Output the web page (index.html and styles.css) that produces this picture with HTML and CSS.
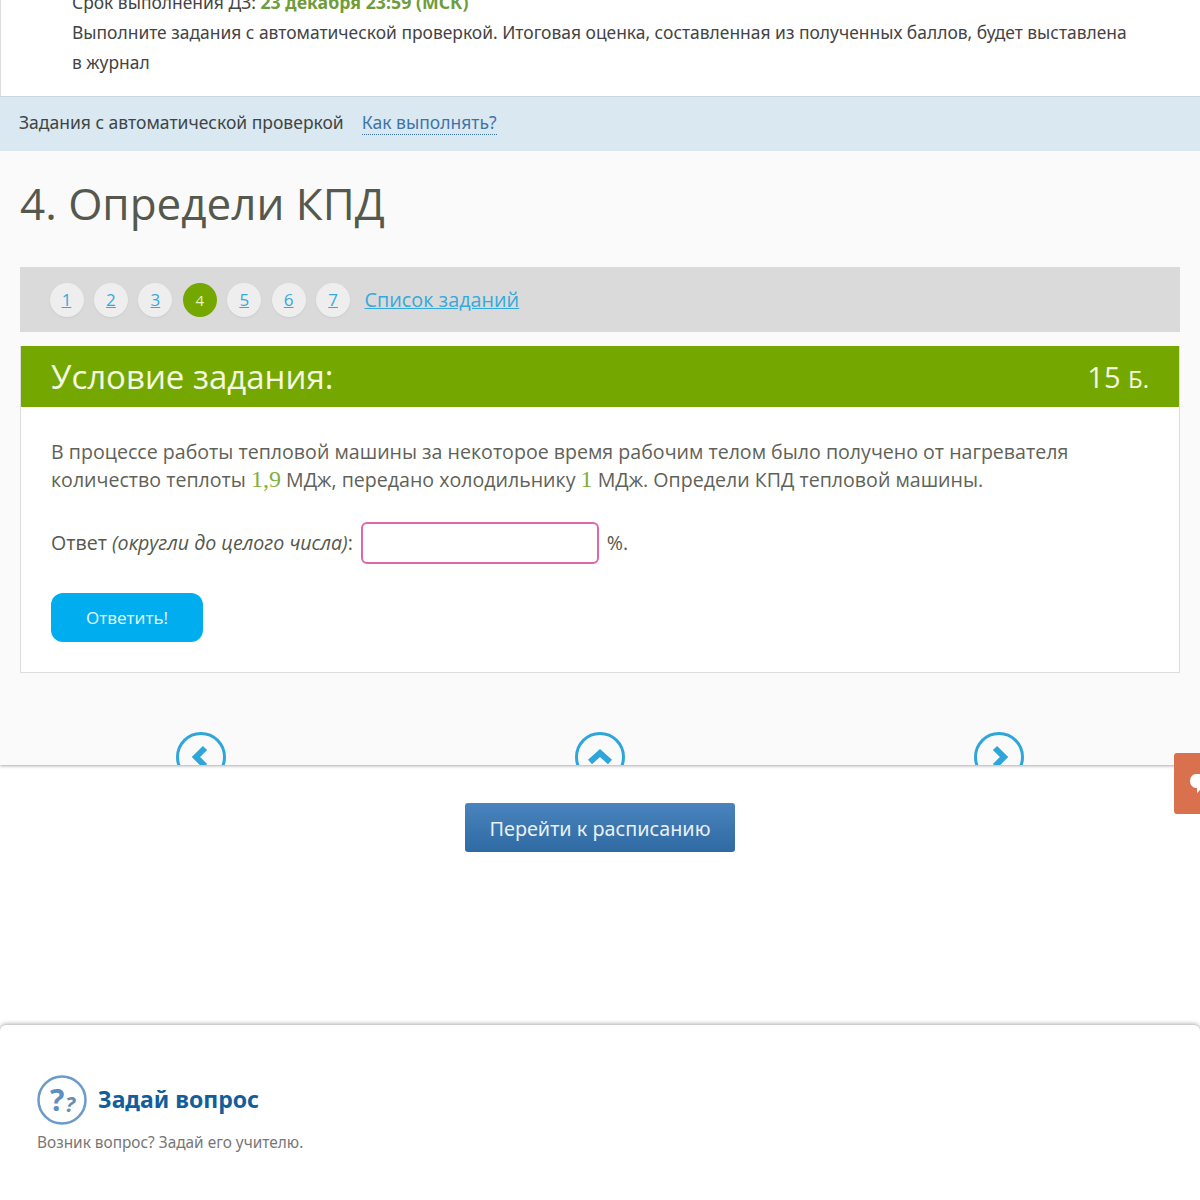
FILE: index.html
```html
<!DOCTYPE html>
<html lang="ru">
<head>
    <meta charset="UTF-8" />
    <title>Определи КПД</title>
    <link rel="stylesheet" href="styles.css">
</head>
<body>
    <div class="page">
        <div class="intro">
            <p>Срок выполнения ДЗ: <b class="deadline">23 декабря 23:59 (МСК)</b></p>
            <p>Выполните задания с автоматической проверкой. Итоговая оценка, составленная из полученных баллов, будет выставлена в журнал</p>
        </div>
        <div class="mode-bar">
            <span>Задания с автоматической проверкой</span>
            <a class="how-link" href="#">Как выполнять?</a>
        </div>

        <div class="lesson">
            <h1>4. Определи КПД</h1>

            <div class="pager">
                <a class="pager-num" href="#">1</a>
                <a class="pager-num" href="#">2</a>
                <a class="pager-num" href="#">3</a>
                <span class="pager-num current">4</span>
                <a class="pager-num" href="#">5</a>
                <a class="pager-num" href="#">6</a>
                <a class="pager-num" href="#">7</a>
                <a class="pager-list" href="#">Список заданий</a>
            </div>

            <div class="task">
                <div class="task-head">
                    <span class="task-title">Условие задания:</span>
                    <span class="task-score">15 <small>Б.</small></span>
                </div>
                <div class="task-body">
                    <p class="task-text">В процессе работы тепловой машины за некоторое время рабочим телом было получено от нагревателя количество теплоты <span class="num">1,9</span> МДж, передано холодильнику <span class="num">1</span> МДж. Определи КПД тепловой машины.</p>
                    <div class="answer">
                        <span>Ответ <i>(округли до целого числа)</i>:</span>
                        <input class="answer-input" type="text">
                        <span>%.</span>
                    </div>
                    <button class="submit">Ответить!</button>
                </div>
            </div>

            <div class="arrows">
                <a class="arrow" href="#">
                    <svg width="50" height="50" viewBox="0 0 50 50"><circle cx="25" cy="25" r="23.5" class="arrow-ring"/><path d="M29 16 L20 25 L29 34" class="arrow-mark"/></svg>
                </a>
                <a class="arrow" href="#">
                    <svg width="50" height="50" viewBox="0 0 50 50"><circle cx="25" cy="25" r="23.5" class="arrow-ring"/><path d="M15 30 L25 21 L35 30" class="arrow-mark"/></svg>
                </a>
                <a class="arrow" href="#">
                    <svg width="50" height="50" viewBox="0 0 50 50"><circle cx="25" cy="25" r="23.5" class="arrow-ring"/><path d="M21 16 L30 25 L21 34" class="arrow-mark"/></svg>
                </a>
            </div>
        </div>

        <div class="schedule">
            <a class="schedule-btn" href="#">Перейти к расписанию</a>
        </div>

        <div class="ask">
            <div class="ask-head">
                <svg width="50" height="50" viewBox="0 0 50 50"><circle cx="25" cy="25" r="23.5" class="ask-ring"/><text x="13" y="36" class="ask-big">?</text><text x="28" y="37" class="ask-small">?</text></svg>
                <h2>Задай вопрос</h2>
            </div>
            <p class="ask-note">Возник вопрос? Задай его учителю.</p>
        </div>

        <a class="feedback" href="#">
            <svg width="26" height="24" viewBox="0 0 26 24"><path d="M8 3 H24 A5 5 0 0 1 26 4 V17 H14 L9 22 V17 H8 A6 7 0 0 1 8 3 Z" fill="#fff"/></svg>
        </a>
    </div>
</body>
</html>
```

FILE: styles.css
```css
* {
    margin: 0;
    padding: 0;
    box-sizing: border-box;
}

body {
    background: #fff;
    color: #4a4a42;
    font-family: 'Open Sans', sans-serif;
}

.page {
    position: relative;
    height: 1200px;
    overflow: hidden;
}

.intro {
    margin-top: -16px;
    height: 112px;
    padding: 3px 60px 0 71px;
    background: #fff;
    border-left: 1px solid #ddd;
    font-family: 'Noto Sans', sans-serif;
    font-size: 17.43px;
    line-height: 30px;
    color: #444;
}

.deadline {
    color: #6f9c3d;
    font-size: 17.75px;
    font-weight: 700;
}

.mode-bar {
    position: relative;
    z-index: 1;
    height: 55px;
    padding: 0 19px 4px;
    display: flex;
    align-items: center;
    gap: 18px;
    background: #d9e8f1;
    border-top: 1px solid #c9d8e2;
    font-family: 'Noto Sans', sans-serif;
    font-size: 17.5px;
    color: #3f4545;
}

.how-link {
    color: #3f74a8;
    text-decoration: none;
    border-bottom: 1px dotted #3f74a8;
}

.lesson {
    position: relative;
    height: 614px;
    overflow: hidden;
    padding: 0 20px;
    background: #fafafa;
    box-shadow: 0 1px 3px #aaa;
}

h1 {
    height: 116px;
    font-size: 44px;
    font-weight: 400;
    line-height: 104px;
    color: #55584c;
}

.pager {
    height: 65px;
    padding: 0 29.5px;
    display: flex;
    align-items: center;
    gap: 10.45px;
    background: #dadada;
}

.pager-num {
    width: 34px;
    height: 34px;
    border-radius: 50%;
    background: #eee;
    box-shadow: 0 1px 2px #ccc;
    color: #35a9dc;
    font-size: 17px;
    line-height: 34px;
    text-align: center;
}

.pager-num.current {
    background: #74a800;
    box-shadow: none;
    color: #e6f2c0;
    font-size: 15px;
}

.pager-list {
    margin-left: 4px;
    color: #35a9dc;
    font-size: 19.8px;
}

.task {
    margin-top: 14px;
    height: 327px;
    background: #fff;
    border: 1px solid #ddd;
    border-top: 0;
}

.task-head {
    height: 61px;
    padding: 0 30px;
    display: flex;
    align-items: center;
    justify-content: space-between;
    background: #74a800;
    color: #f4f9e4;
    font-size: 33px;
}

.task-score {
    font-size: 29px;
}

.task-score small {
    font-size: 24px;
}

.task-body {
    padding: 31px 30px 0;
    font-size: 19.6px;
    line-height: 28px;
    color: #5f6258;
}

.num {
    font-family: 'Liberation Serif', serif;
    font-size: 24px;
    line-height: 1;
    color: #7fb03c;
}

.answer {
    margin-top: 28px;
    display: flex;
    align-items: center;
    gap: 8px;
    color: #55584c;
}

.answer-input {
    width: 238px;
    height: 42px;
    border: 2px solid #de68a8;
    border-radius: 6px;
    background: #fff;
}

.submit {
    display: block;
    margin-top: 29px;
    width: 152px;
    height: 49px;
    border: 0;
    border-radius: 12px;
    background: #00aeef;
    color: #e8f8ff;
    font-family: 'Open Sans', sans-serif;
    font-size: 17px;
}

.arrows {
    margin-top: 59px;
    padding: 0 156px;
    display: flex;
    justify-content: space-between;
}

.arrow-ring {
    fill: none;
    stroke: #2fa6da;
    stroke-width: 3;
}

.arrow-mark {
    fill: none;
    stroke: #2fa6da;
    stroke-width: 6;
}

.schedule {
    height: 260px;
    padding-top: 38px;
    display: flex;
    justify-content: center;
    align-items: flex-start;
}

.schedule-btn {
    width: 270px;
    height: 49px;
    border-radius: 3px;
    background: linear-gradient(#4a83bd, #2f6aa3);
    color: #e8f0f7;
    font-family: 'Noto Sans', sans-serif;
    font-size: 19.8px;
    line-height: 51px;
    text-align: center;
    text-decoration: none;
}

.ask {
    position: relative;
    height: 180px;
    padding: 50px 37px 0;
    background: #fff;
    border-radius: 6px 6px 0 0;
    box-shadow: 0 -1px 4px #aaa;
}

.ask-head {
    display: flex;
    align-items: center;
    gap: 11px;
}

.ask-ring {
    fill: none;
    stroke: #6a9bcb;
    stroke-width: 2.5;
}

.ask-big {
    fill: #5b8fc4;
    font-family: 'Noto Sans', sans-serif;
    font-size: 30px;
    font-weight: 700;
}

.ask-small {
    fill: #6a8eb0;
    font-family: 'Noto Sans', sans-serif;
    font-size: 22px;
    font-weight: 700;
    font-style: italic;
}

h2 {
    padding-bottom: 2px;
    font-family: 'Noto Sans', sans-serif;
    font-size: 23px;
    font-weight: 700;
    color: #135d9b;
}

.ask-note {
    margin-top: 7px;
    font-family: 'Noto Sans', sans-serif;
    font-size: 15.4px;
    color: #777;
}

.feedback {
    position: absolute;
    top: 753px;
    right: 0;
    width: 26px;
    height: 61px;
    padding: 18px 0 0 14px;
    overflow: hidden;
    border-radius: 3px 0 0 3px;
    background: #d9714f;
}
```
